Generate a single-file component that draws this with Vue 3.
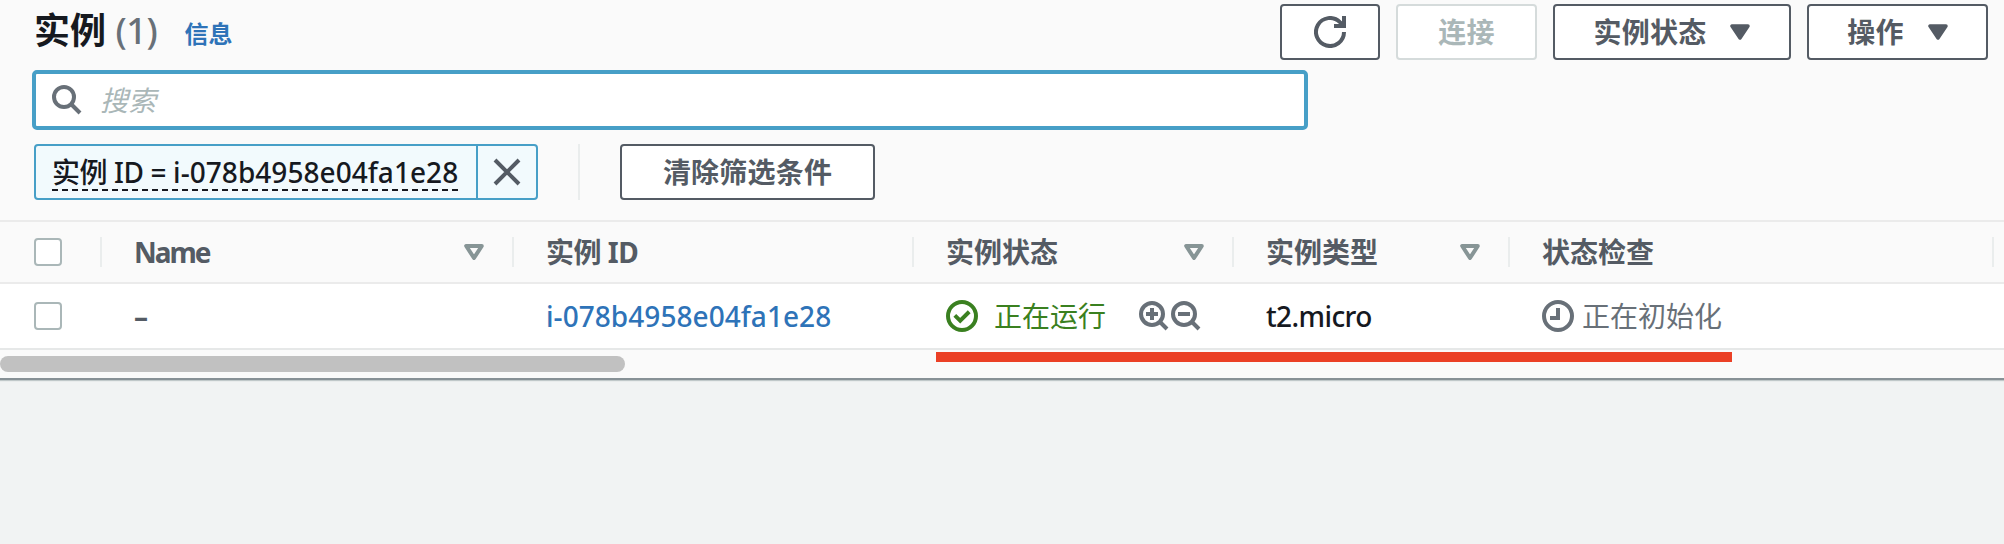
<script setup>
const columns = [
  { key: 'name', label: 'Name', sortable: true, width: 'w-name', latin: true },
  { key: 'id', label: '实例 ID', sortable: false, width: 'w-id', tight: true },
  { key: 'state', label: '实例状态', sortable: true, width: 'w-state' },
  { key: 'type', label: '实例类型', sortable: true, width: 'w-type' },
  { key: 'check', label: '状态检查', sortable: false, width: 'w-check' },
]
</script>

<template>
  <div class="page">
    <section class="panel">
      <header class="head">
        <h1 class="title">实例 <span class="count">(1)</span></h1>
        <a class="info">信息</a>
        <div class="actions">
          <button class="btn refresh">
            <svg width="32" height="32" viewBox="0 0 32 32" fill="none" stroke="currentColor" stroke-width="4">
              <path d="M30 16A14 14 0 1 1 25.9 6.1L29.5 9.5" />
              <path d="M30 0v10H20" />
            </svg>
          </button>
          <button class="btn connect" disabled>连接</button>
          <button class="btn state-btn">实例状态
            <svg class="caret" width="20" height="16" viewBox="0 0 20 16"><path d="M2 2h16l-8 12z" fill="currentColor" stroke="currentColor" stroke-width="3.5" stroke-linejoin="round" /></svg>
          </button>
          <button class="btn ops">操作
            <svg class="caret" width="20" height="16" viewBox="0 0 20 16"><path d="M2 2h16l-8 12z" fill="currentColor" stroke="currentColor" stroke-width="3.5" stroke-linejoin="round" /></svg>
          </button>
        </div>
      </header>

      <div class="search">
        <svg width="30" height="30" viewBox="0 0 30 30" fill="none" stroke="#687078" stroke-width="4">
          <circle cx="12" cy="12" r="10" /><path d="M19 19l9 9" />
        </svg>
        <span class="placeholder">搜索</span>
      </div>

      <div class="filters">
        <div class="chip">
          <div class="chip-text"><span class="token"><span class="prop">实例 ID = </span><span class="ident">i-078b4958e04fa1e28</span></span></div>
          <button class="chip-x">
            <svg width="28" height="28" viewBox="0 0 28 28" fill="none" stroke="#545b64" stroke-width="4"><path d="M2 2l24 24M26 2L2 26" /></svg>
          </button>
        </div>
        <i class="sep"></i>
        <button class="btn clear">清除筛选条件</button>
      </div>

      <div class="row thead">
        <div class="pick"><i class="box"></i></div>
        <div v-for="c in columns" :key="c.key" class="th" :class="c.width">
          <span :class="{ latin: c.latin, tight: c.tight }">{{ c.label }}</span>
          <svg v-if="c.sortable" width="20" height="16" viewBox="0 0 20 16" fill="none" stroke="#879596" stroke-width="4" stroke-linejoin="round"><path d="M2.2 2h15.6L10 14z" /></svg>
        </div>
        <div class="th rest"></div>
      </div>

      <div class="row tbody">
        <div class="pick"><i class="box"></i></div>
        <div class="td w-name dash">–</div>
        <div class="td w-id"><a class="link ident">i-078b4958e04fa1e28</a></div>
        <div class="td w-state ok">
          <svg width="32" height="32" viewBox="0 0 32 32" fill="none" stroke="currentColor" stroke-width="4"><circle cx="16" cy="16" r="14" /><path d="M8.8 15.4l5.4 5.2 9-8.8" /></svg>
          <span class="running">正在运行</span>
          <svg class="mag" width="30" height="30" viewBox="0 0 30 30" fill="none" stroke="#687078" stroke-width="4"><circle cx="13" cy="13" r="11" /><path d="M20 20l8 8M13 7v12M7 13h12" /></svg>
          <svg class="mag" width="30" height="30" viewBox="0 0 30 30" fill="none" stroke="#687078" stroke-width="4"><circle cx="13" cy="13" r="11" /><path d="M20 20l8 8M7 13h12" /></svg>
        </div>
        <div class="td w-type micro">t2.micro</div>
        <div class="td w-check pending">
          <svg width="32" height="32" viewBox="0 0 32 32" fill="none" stroke="currentColor" stroke-width="4"><circle cx="16" cy="16" r="14" /><path d="M16 8v10H8" /></svg>
          <span>正在初始化</span>
        </div>
      </div>

      <div class="scroll"><div class="thumb"></div></div>
      <div class="underline"></div>
    </section>
  </div>
</template>

<style>
body { margin: 0; background: #f1f3f3; }
</style>

<style scoped>
* { box-sizing: border-box; }
.page {
  width: 2004px;
  height: 544px;
  overflow: hidden;
  background: #f1f3f3;
  font: 28px/40px "Noto Sans", "Noto Sans CJK SC", sans-serif;
  color: #16191f;
  white-space: nowrap;
}
.panel {
  position: relative;
  height: 380px;
  background: #fafafa;
}
.head {
  display: flex;
  height: 70px;
  padding: 4px 16px 0 34px;
}
.title {
  margin: 0;
  font-size: 36px;
  line-height: 53px;
  font-weight: 700;
}
.count { font-weight: 500; color: #687078; letter-spacing: -0.3px; }
.info {
  margin-left: 27px;
  font-size: 24px;
  line-height: 60px;
  font-weight: 700;
  color: #2e73b8;
}
.actions { display: flex; gap: 16px; margin-left: auto; }
.btn {
  display: flex;
  align-items: center;
  justify-content: center;
  height: 56px;
  padding: 0;
  border: 2px solid #545b64;
  border-radius: 4px;
  background: #fff;
  color: #545b64;
  font: inherit;
  font-weight: 700;
  letter-spacing: 0.2px;
}
.refresh { width: 100px; }
.connect { width: 141px; border-color: #d5dbdb; color: #aab7b8; }
.state-btn { width: 238px; }
.ops { width: 181px; }
.caret { margin-left: 24px; }
.search {
  display: flex;
  align-items: center;
  width: 1276px;
  height: 60px;
  margin-left: 32px;
  padding-left: 16px;
  border: 4px solid #479fc7;
  border-radius: 5px;
  background: #fff;
}
.placeholder { margin-left: 18px; font-style: italic; color: #aab7b8; }
.filters { display: flex; padding: 14px 0 0 34px; height: 90px; }
.chip {
  display: flex;
  width: 504px;
  height: 56px;
  border: 2px solid #479fc7;
  border-radius: 4px;
  background: #f2fafd;
}
.chip-text { flex: 1; padding: 7px 0 0 16px; }
.token {
  display: block;
  width: 408px;
  height: 38px;
  line-height: 38px;
  background: repeating-linear-gradient(90deg, #16191f 0 6px, transparent 6px 10px) bottom / 100% 2px no-repeat;
}
.prop { letter-spacing: -0.4px; white-space: pre; font-weight: 500; }
.ident { letter-spacing: 0.05px; font-weight: 500; }
.chip-x {
  display: flex;
  align-items: center;
  justify-content: center;
  width: 60px;
  padding: 0;
  border: 0;
  border-left: 2px solid #479fc7;
  background: none;
}
.sep { width: 2px; height: 56px; margin: 0 40px; background: #eaeded; }
.clear { width: 255px; }
.row { display: flex; align-items: center; }
.thead {
  height: 64px;
  border-top: 2px solid #ebebeb;
  border-bottom: 2px solid #ebebeb;
  font-weight: 700;
  color: #545b64;
}
.tbody {
  height: 66px;
  border-bottom: 2px solid #e6e8e8;
  background: #fff;
}
.pick { width: 100px; padding-left: 34px; }
.box {
  display: block;
  width: 28px;
  height: 28px;
  border: 2px solid #aab7b8;
  border-radius: 4px;
  background: #fff;
}
.th {
  display: flex;
  align-items: center;
  justify-content: space-between;
  height: 30px;
  padding: 0 28px 0 32px;
  border-left: 2px solid #eaeded;
}
.latin { letter-spacing: -2px; }
.tight { letter-spacing: -0.5px; }
.td { display: flex; align-items: center; padding-left: 34px; }
.w-name { width: 412px; }
.w-id { width: 400px; }
.w-state { width: 320px; }
.w-type { width: 276px; }
.w-check { width: 484px; }
.rest { width: 12px; padding: 0; }
.dash { color: #545b64; font-weight: 700; }
.link { color: #2e73b8; }
.micro { letter-spacing: -0.6px; font-weight: 500; }
.ok { color: #3a8020; }
.running { margin: 0 33px 0 16px; }
.mag { margin-right: 2px; }
.pending { color: #687078; }
.pending span { margin-left: 8px; }
.scroll {
  height: 30px;
  padding-top: 6px;
  border-bottom: 2px solid #879196;
  box-shadow: 0 1px 1px rgba(0, 28, 36, 0.2);
}
.thumb { width: 625px; height: 16px; border-radius: 8px; background: #c1c1c1; }
.underline {
  position: absolute;
  left: 936px;
  top: 352px;
  width: 796px;
  height: 10px;
  background: #eb4026;
}
</style>
